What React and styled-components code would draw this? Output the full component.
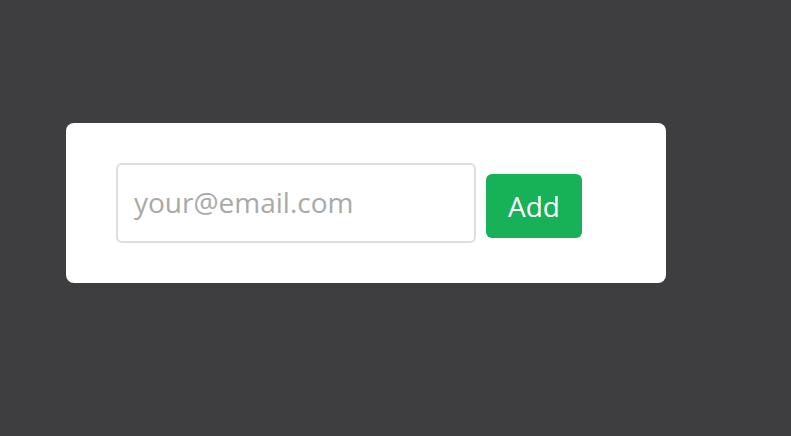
import React from 'react';
import styled, { createGlobalStyle } from 'styled-components';

const GlobalStyle = createGlobalStyle`
  html, body {
    margin: 0;
    padding: 0;
    background: #3e3e40;
    font-family: "Open Sans", "Liberation Sans", sans-serif;
  }
`

const Page = styled.div`
  width: 791px;
  height: 436px;
  padding: 123px 0 0 66px;
  box-sizing: border-box;
`

const Card = styled.form`
  width: 600px;
  height: 160px;
  box-sizing: border-box;
  padding: 40px 50px;
  background: #ffffff;
  border-radius: 8px;
  display: flex;
  align-items: flex-start;
  gap: 10px;
`

const EmailInput = styled.input`
  width: 360px;
  height: 80px;
  box-sizing: border-box;
  padding: 0 16px 3px;
  border: 2px solid #dedede;
  border-radius: 6px;
  font-family: inherit;
  font-size: 28px;
  color: #333;
  outline: none;

  &::placeholder {
    color: #a9a9a9;
  }
`

const AddButton = styled.button`
  margin-top: 11px;
  width: 96px;
  height: 64px;
  border: none;
  border-radius: 6px;
  background: #17b157;
  color: #ffffff;
  font-family: inherit;
  font-size: 28px;
  cursor: pointer;
`

const App = () => {
  return (
    <Page>
      <GlobalStyle />
      <Card onSubmit={e => e.preventDefault()}>
        <EmailInput type="email" placeholder="your@email.com" />
        <AddButton type="submit">Add</AddButton>
      </Card>
    </Page>
  )
}

export default App
